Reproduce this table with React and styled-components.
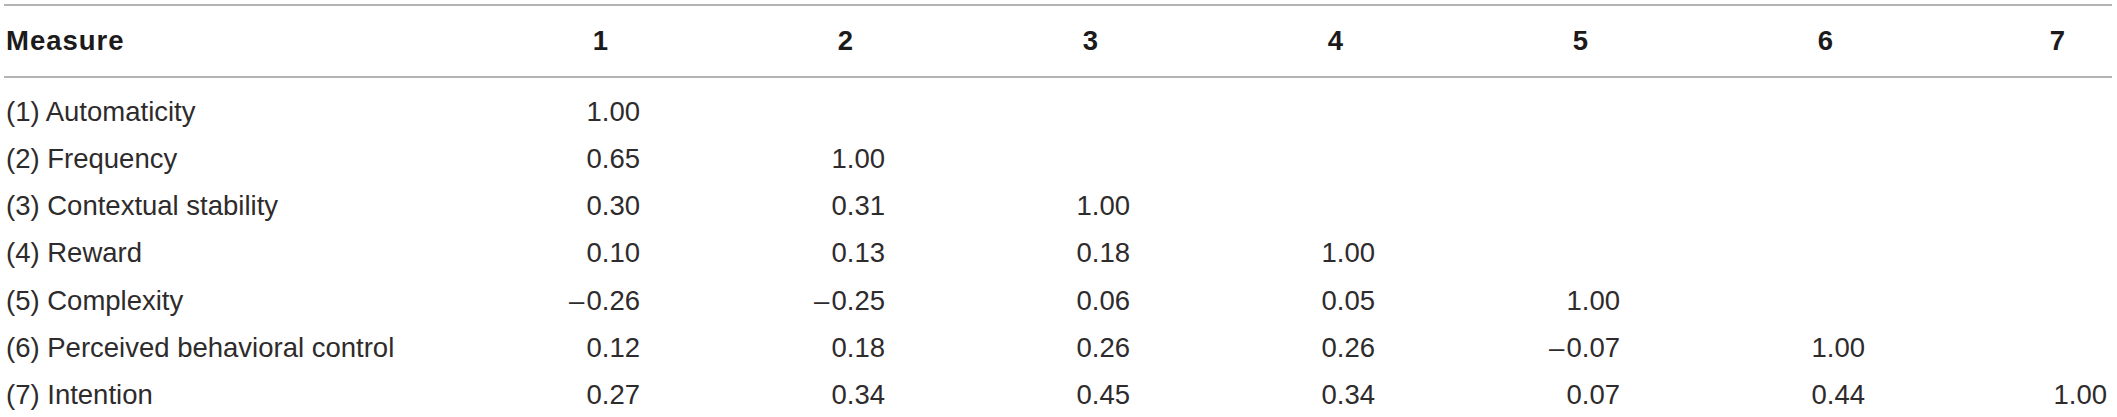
import React from 'react'
import styled, { createGlobalStyle } from 'styled-components'

const GlobalStyle = createGlobalStyle`
  body {
    margin: 0;
    background: #ffffff;
  }
`

const columns = '474px repeat(6, 245px) 1fr'

const Table = styled.div`
  margin: 4px 0 0 4px;
  width: 2108px;
  border-top: 2px solid #b4b4b4;
  font-family: "Liberation Sans", Arial, sans-serif;
  font-size: 27.5px;
  color: #2e2b2c;
`

const HeadRow = styled.div`
  display: grid;
  grid-template-columns: ${columns};
  align-items: center;
  height: 70px;
  border-bottom: 2px solid #b4b4b4;
`

const HeadCell = styled.div`
  font-weight: 700;
  color: #1c1a1b;
  line-height: 1.1;
  text-align: ${props => props.$align || 'center'};
  padding: ${props => props.$pad || '0'};
  letter-spacing: ${props => (props.$wide ? '1px' : '0')};
`

const Body = styled.div`
  padding-top: 10px;
`

const Row = styled.div`
  display: grid;
  grid-template-columns: ${columns};
  align-items: center;
  height: 47.3px;
`

const Label = styled.div`
  padding-left: 2px;
  line-height: 1.1;
  white-space: nowrap;
`

const Value = styled.div`
  text-align: right;
  line-height: 1.1;
  padding-right: ${props => (props.$last ? '5px' : '83px')};
  white-space: nowrap;
`

// en dash followed by a hair space, as the source typesets negatives
const neg = v => `\u2013\u200A${v}`

const rows = [
  { label: '(1) Automaticity', values: ['1.00'] },
  { label: '(2) Frequency', values: ['0.65', '1.00'] },
  { label: '(3) Contextual stability', values: ['0.30', '0.31', '1.00'] },
  { label: '(4) Reward', values: ['0.10', '0.13', '0.18', '1.00'] },
  { label: '(5) Complexity', values: [neg('0.26'), neg('0.25'), '0.06', '0.05', '1.00'] },
  { label: '(6) Perceived behavioral control', values: ['0.12', '0.18', '0.26', '0.26', neg('0.07'), '1.00'] },
  { label: '(7) Intention', values: ['0.27', '0.34', '0.45', '0.34', '0.07', '0.44', '1.00'] },
]

const App = () => {
  const heads = [1, 2, 3, 4, 5, 6, 7]
  return (
    <>
      <GlobalStyle />
      <Table>
        <HeadRow>
          <HeadCell $align="left" $pad="0 0 0 2px" $wide>Measure</HeadCell>
          {heads.map(h => (
            <HeadCell key={h} $pad={h === 7 ? '0 0 0 55px' : '0'}>{h}</HeadCell>
          ))}
        </HeadRow>
        <Body>
          {rows.map(row => (
            <Row key={row.label}>
              <Label>{row.label}</Label>
              {heads.map((h, i) => (
                <Value key={h} $last={h === 7}>{row.values[i] || ''}</Value>
              ))}
            </Row>
          ))}
        </Body>
      </Table>
    </>
  )
}

export default App
